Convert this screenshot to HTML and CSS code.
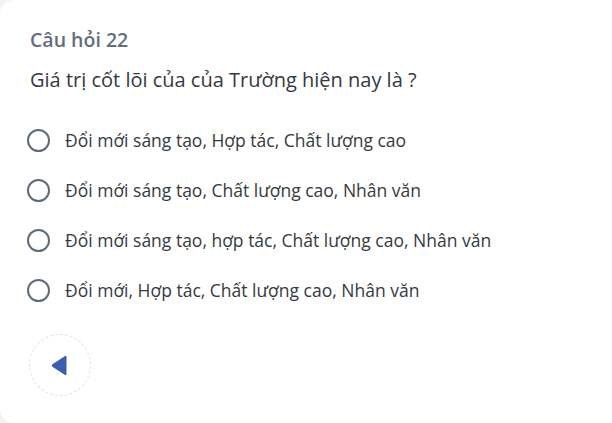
FILE: index.html
```html
<!DOCTYPE html>
<html lang="vi">
<head>
<meta charset="utf-8">
<link rel="stylesheet" href="styles.css">
</head>
<body>
<div class="card">
  <div class="qnum">Câu hỏi 22</div>
  <div class="qtext">Giá trị cốt lõi của của Trường hiện nay là ?</div>
  <div class="options">
    <label class="opt"><span class="radio"></span><span>Đổi mới sáng tạo, Hợp tác, Chất lượng cao</span></label>
    <label class="opt"><span class="radio"></span><span>Đổi mới sáng tạo, Chất lượng cao, Nhân văn</span></label>
    <label class="opt"><span class="radio"></span><span>Đổi mới sáng tạo, hợp tác, Chất lượng cao, Nhân văn</span></label>
    <label class="opt"><span class="radio"></span><span>Đổi mới, Hợp tác, Chất lượng cao, Nhân văn</span></label>
  </div>
  <div class="nav">
    <button class="back" aria-label="Trước">
      <svg width="16" height="21" viewBox="0 0 16 21"><path d="M15.5 2.2 L15.5 18.8 Q15.5 21 13.7 19.8 L1.4 11.8 Q0 10.5 1.4 9.2 L13.7 1.2 Q15.5 0 15.5 2.2 Z" fill="#3b5db0"/></svg>
    </button>
  </div>
</div>
</body>
</html>
```
FILE: styles.css
```css
html, body { margin: 0; padding: 0; }
body {
  background: #f2f2f2;
  width: 612px;
  height: 423px;
  overflow: hidden;
  font-family: "Open Sans", "Noto Sans", sans-serif;
}
.card {
  background: #fff;
  width: 640px;
  height: 423px;
  border-radius: 14px;
  box-sizing: border-box;
  padding: 28px 0 0 30px;
}
.qnum {
  font-size: 19.5px;
  font-weight: 600;
  color: #636e7b;
  line-height: 24px;
}
.qtext {
  margin-top: 15px;
  font-size: 20px;
  color: #343a40;
  line-height: 25px;
}
.options {
  margin-top: 36px;
  display: flex;
  flex-direction: column;
  gap: 26px;
  margin-left: -3px;
}
.opt {
  display: flex;
  align-items: center;
  gap: 15px;
  font-size: 17.5px;
  color: #343a40;
  line-height: 24px;
}
.radio {
  width: 19px;
  height: 19px;
  border: 2.6px solid #5e6b7a;
  border-radius: 50%;
  flex: none;
}
.nav {
  margin-top: 32px;
}
.back {
  width: 62px;
  height: 62px;
  border: 1px dashed #e2e2e2;
  border-radius: 50%;
  background: #fff;
  display: flex;
  align-items: center;
  justify-content: center;
  padding: 0;
  margin-left: -1px;
}
.back svg { margin-right: 3px; }
```
